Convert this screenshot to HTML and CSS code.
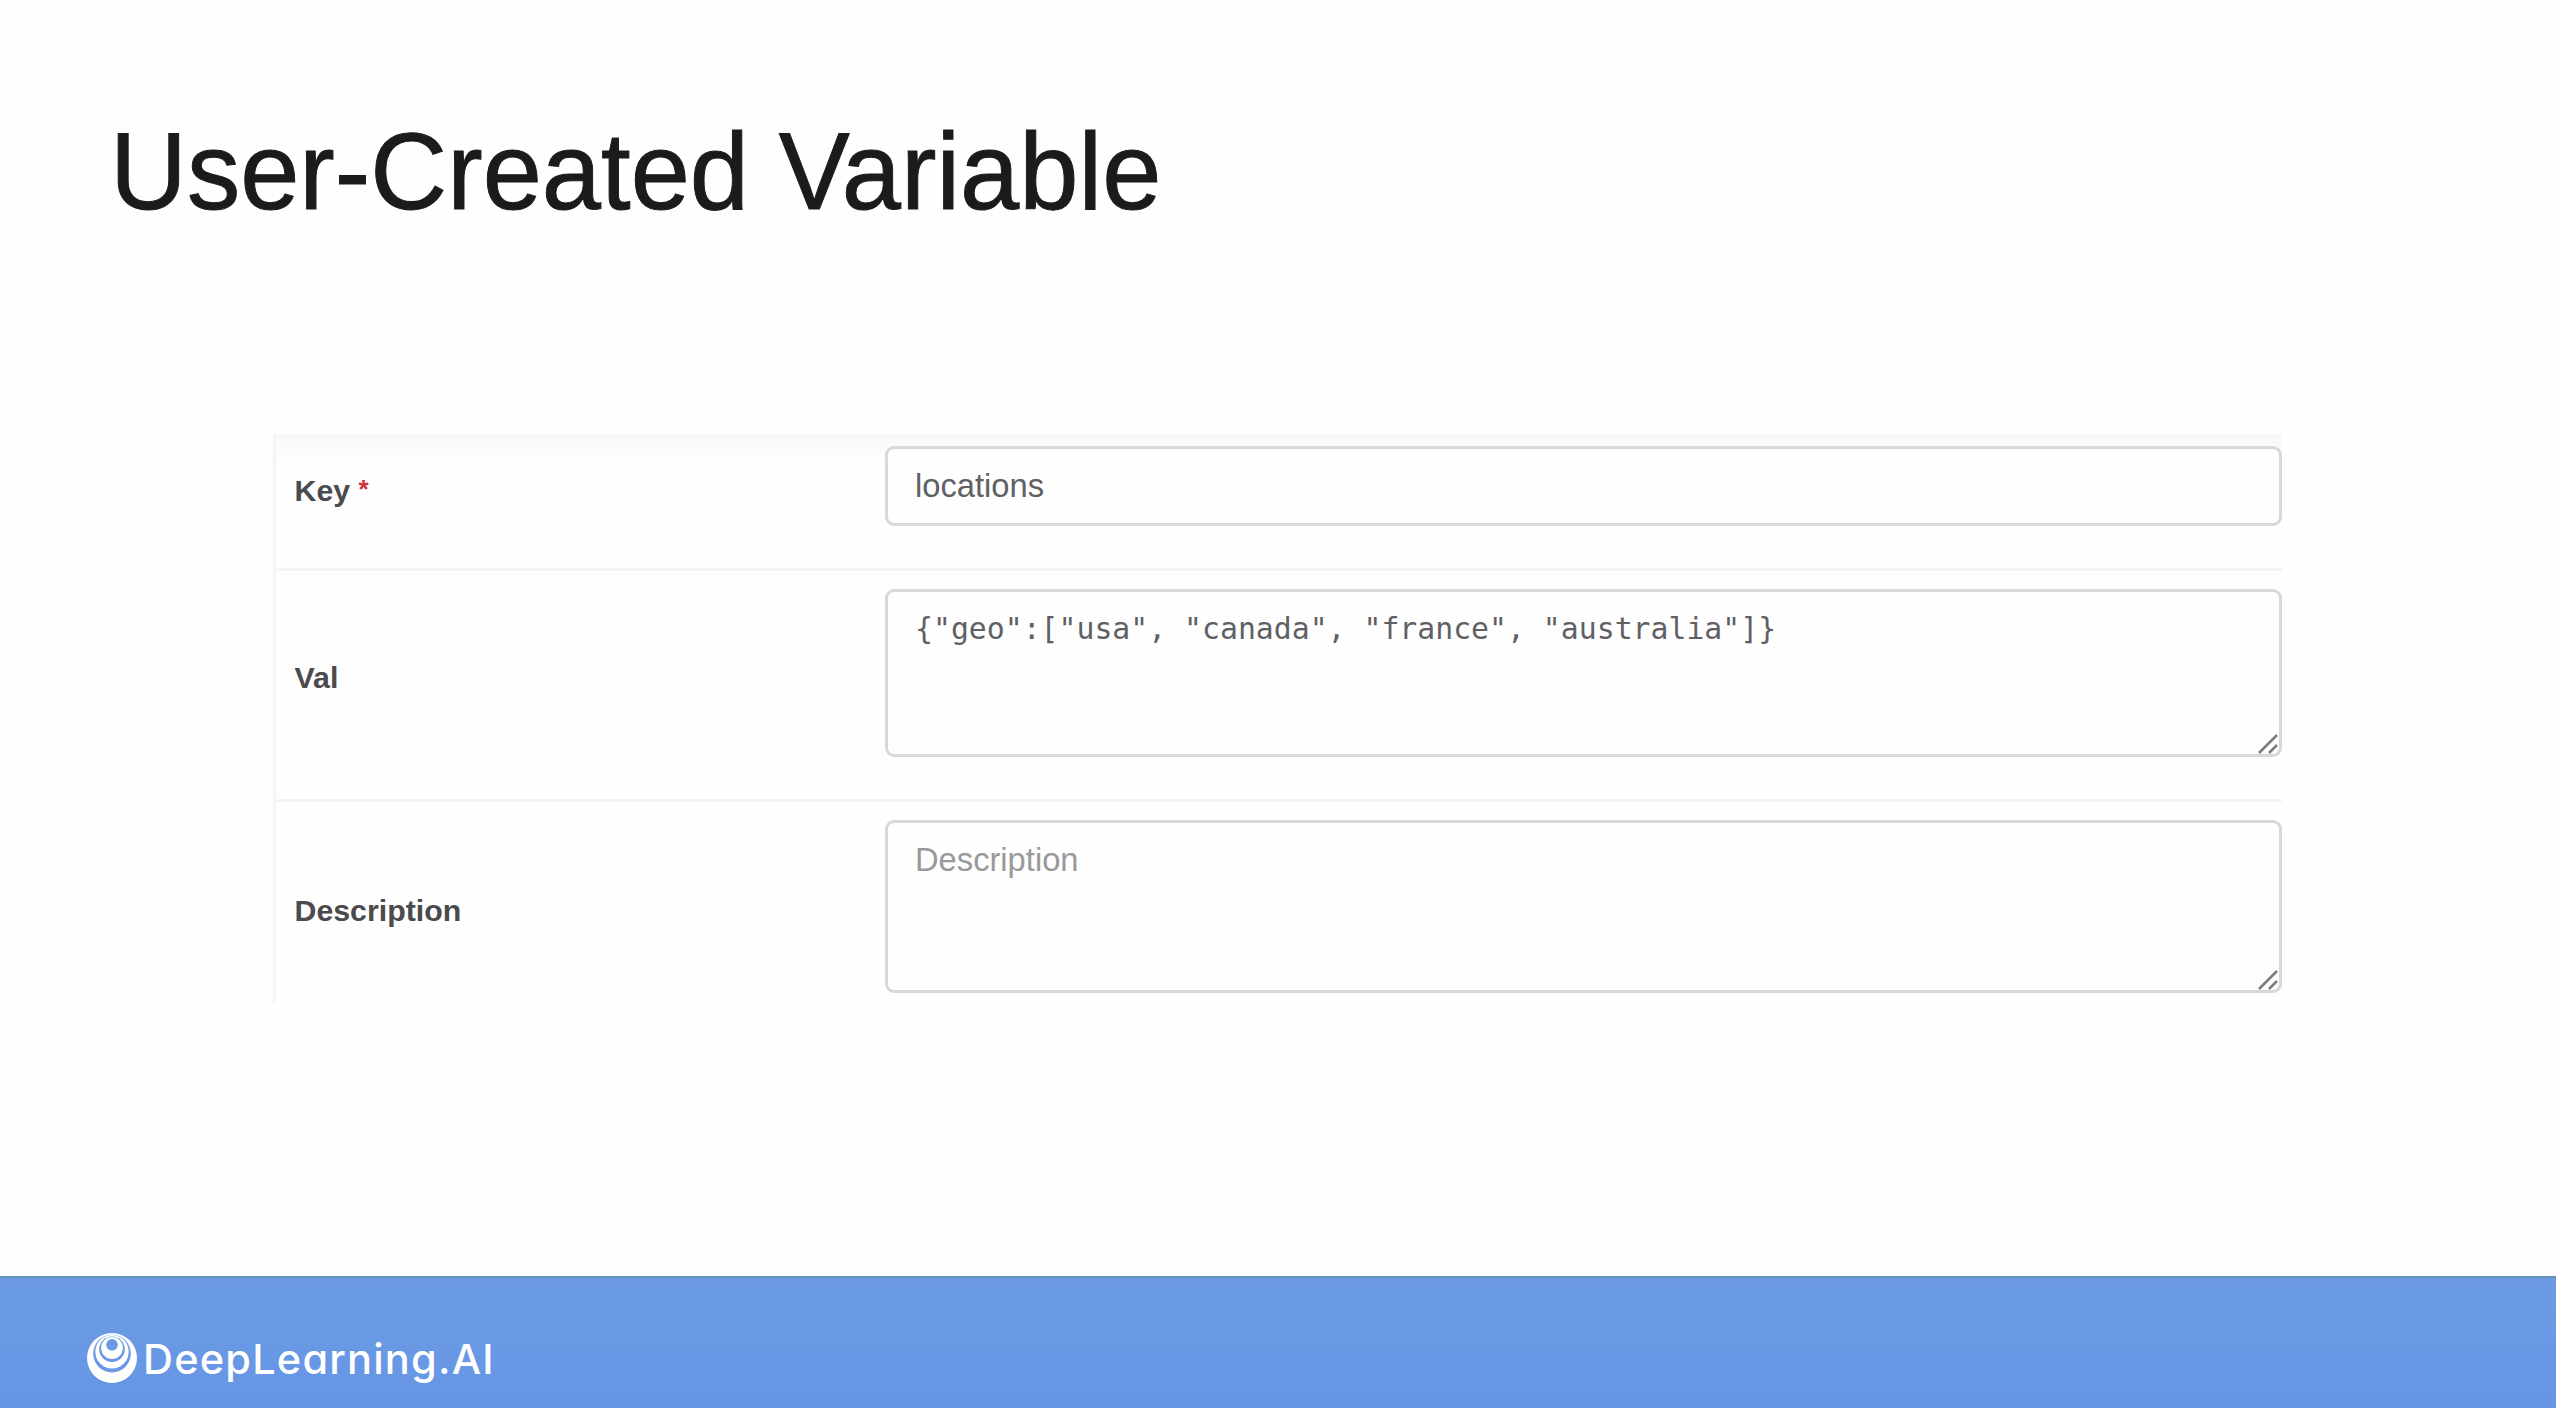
FILE: index.html
```html
<!DOCTYPE html>
<html lang="en">
<head>
<meta charset="utf-8">
<title>User-Created Variable</title>
<link rel="stylesheet" href="styles.css">
</head>
<body>
<main class="slide">
  <h1 class="title">User-Created Variable</h1>
  <form class="form">
    <div class="row row-key">
      <label class="label" for="key">Key <span class="required">*</span></label>
      <div class="field" id="key">locations</div>
    </div>
    <div class="row row-val">
      <label class="label" for="val">Val</label>
      <div class="field area mono" id="val">{"geo":["usa", "canada", "france", "australia"]}
        <svg class="grip" viewBox="0 0 22 22"><path d="M2 20 20 2M12 20l8-8"/></svg>
      </div>
    </div>
    <div class="row row-desc">
      <label class="label" for="desc">Description</label>
      <div class="field area placeholder" id="desc">Description
        <svg class="grip" viewBox="0 0 22 22"><path d="M2 20 20 2M12 20l8-8"/></svg>
      </div>
    </div>
  </form>
  <footer class="footer">
    <svg class="logo" viewBox="0 0 50 50">
      <circle cx="25" cy="25" r="25" fill="#fff"/>
      <circle cx="25" cy="20.6" r="18.8" fill="#6b98e4"/>
      <circle cx="25" cy="18.8" r="16.7" fill="#fff"/>
      <circle cx="25" cy="16.2" r="12.8" fill="#6b98e4"/>
      <circle cx="25" cy="15" r="10.9" fill="#fff"/>
      <circle cx="25" cy="11.8" r="5.8" fill="#6b98e4"/>
    </svg>
    <span class="brand">DeepLearning.AI</span>
  </footer>
</main>
</body>
</html>
```

FILE: styles.css
```css
* { box-sizing: border-box; }

body {
  margin: 0;
  background: #fefefe;
  font-family: "Liberation Sans", Arial, sans-serif;
}

.slide {
  width: 2556px;
  height: 1408px;
  display: flex;
  flex-direction: column;
  overflow: hidden;
}

.title {
  margin: 103px 0 0 110px;
  height: 331px;
  font-size: 110px;
  line-height: 136px;
  font-weight: 400;
  color: #1b1b1b;
  -webkit-text-stroke: 1px #1b1b1b;
  white-space: nowrap;
  transform: scaleX(0.968);
  transform-origin: 0 0;
}

.form {
  width: 2009px;
  height: 569px;
  margin-left: 273px;
  flex: none;
  border-left: 3px solid #f5f5f5;
  background: linear-gradient(#f8f8f8, #fefefe 28px);
}

.row {
  display: flex;
  border-bottom: 3px solid #f4f4f4;
}

.row-key { height: 137px; padding-top: 12px; }
.row-val { height: 231px; padding-top: 18px; }
.row-desc { height: 201px; padding-top: 18px; border-bottom: 0; }

.label {
  width: 609px;
  padding-left: 18.5px;
  font-size: 30.3px;
  line-height: 36px;
  font-weight: 700;
  color: #4b4b4d;
}

.row-key .label { padding-top: 27px; }
.row-val .label { padding-top: 71px; }
.row-desc .label { padding-top: 73px; }

.required {
  position: relative;
  top: -3px;
  color: #d0333b;
  font-size: 26px;
}

.field {
  position: relative;
  width: 1397px;
  height: 80px;
  padding: 18px 27px;
  border: 3px solid #d8d8d8;
  border-radius: 9px;
  background: #fefefe;
  font-size: 32.7px;
  line-height: 38px;
  color: #606064;
}

.area { height: 168px; }
.area.placeholder { height: 173px; color: #999; }

.mono {
  font-family: "DejaVu Sans Mono", monospace;
  font-size: 29.8px;
  white-space: nowrap;
}

.grip {
  position: absolute;
  right: 0;
  bottom: -1px;
  width: 22px;
  height: 22px;
  fill: none;
  stroke: #7c7c7c;
  stroke-width: 2.5;
}

.footer {
  margin-top: auto;
  height: 132px;
  flex: none;
  display: flex;
  align-items: flex-start;
  padding: 55px 0 0 87px;
  border-top: 2px solid #6491bd;
  background: linear-gradient(#6c9be4, #6695e5);
}

.logo {
  width: 50px;
  height: 50px;
  flex: none;
}

.brand {
  margin: 1px 0 0 6px;
  font-family: Inter, sans-serif;
  font-feature-settings: "cv11";
  font-size: 41.5px;
  line-height: 50px;
  font-weight: 500;
  color: #fff;
  letter-spacing: 1.2px;
}
```
